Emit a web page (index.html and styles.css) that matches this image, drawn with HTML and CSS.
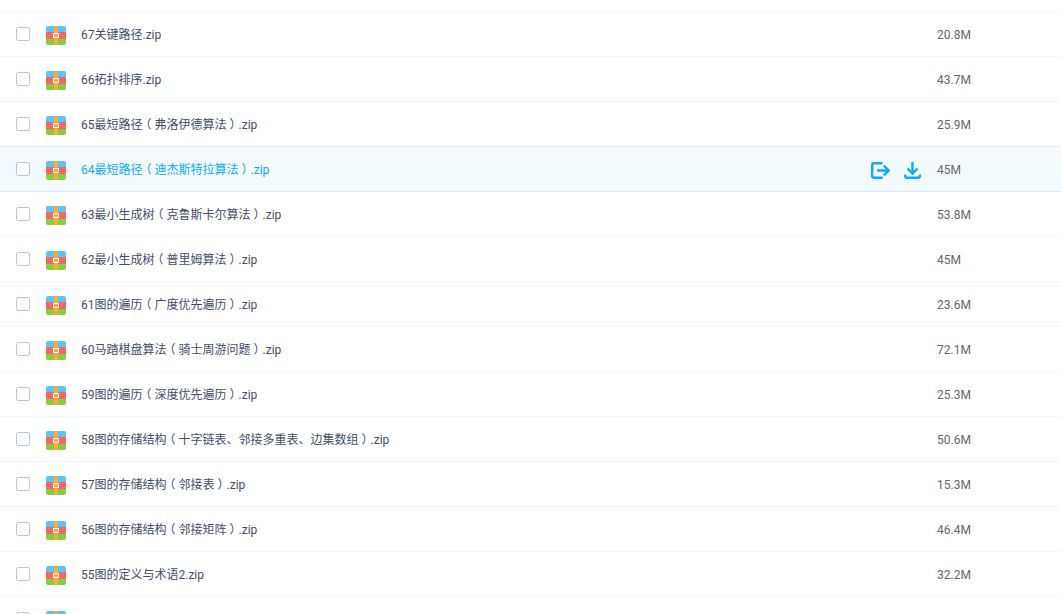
FILE: index.html
```html
<!DOCTYPE html>
<html lang="zh">
<head>
<meta charset="utf-8">
<title>文件列表</title>
<link rel="stylesheet" href="styles.css">
</head>
<body>
<svg class="defs" width="0" height="0" aria-hidden="true">
  <symbol id="zip" viewBox="0 0 20 19">
    <path d="M0 6V2a2 2 0 0 1 2-2h16a2 2 0 0 1 2 2v4z" fill="#59c5fa"/>
    <rect y="6" width="20" height="7" fill="#fc6363"/>
    <path d="M0 13h20v4a2 2 0 0 1-2 2H2a2 2 0 0 1-2-2z" fill="#84cf3f"/>
    <rect x="8" width="4" height="19" fill="#fbab37"/>
    <rect x="7" y="7" width="6" height="5" fill="#fff"/>
    <rect x="8" y="8" width="4" height="3" fill="#fbab37"/>
  </symbol>
</svg>
<ul class="list">
  <li class="row"><span class="check"></span><svg class="zip"><use href="#zip"/></svg></li>
  <li class="row"><span class="check"></span><svg class="zip"><use href="#zip"/></svg><span class="name">67关键路径.zip</span><span class="size">20.8M</span></li>
  <li class="row"><span class="check"></span><svg class="zip"><use href="#zip"/></svg><span class="name">66拓扑排序.zip</span><span class="size">43.7M</span></li>
  <li class="row"><span class="check"></span><svg class="zip"><use href="#zip"/></svg><span class="name">65最短路径<span class="paren">（</span>弗洛伊德算法<span class="paren">）</span>.zip</span><span class="size">25.9M</span></li>
  <li class="row active"><span class="check"></span><svg class="zip"><use href="#zip"/></svg><span class="name">64最短路径<span class="paren">（</span>迪杰斯特拉算法<span class="paren">）</span>.zip</span>
    <span class="actions">
      <svg class="act" viewBox="0 0 19 17" width="19" height="17" fill="none" stroke="#09aaff" stroke-width="2.4"><path d="M11.500 1.200H3a1.800 1.800 0 0 0-1.800 1.800v11a1.800 1.800 0 0 0 1.800 1.800h8.500"/><path d="M6 8.500h11.500M12.800 3.600l4.900 4.900-4.900 4.900"/></svg>
      <svg class="act" viewBox="0 0 17 17" width="17" height="17" fill="none" stroke="#09aaff" stroke-width="2.4"><path d="M8.500 0v11M3.500 6.500l5 5 5-5"/><path d="M1.200 12.500v1.800a1.500 1.500 0 0 0 1.500 1.500h11.600a1.500 1.500 0 0 0 1.500-1.500v-1.800"/></svg>
    </span>
    <span class="size">45M</span></li>
  <li class="row"><span class="check"></span><svg class="zip"><use href="#zip"/></svg><span class="name">63最小生成树<span class="paren">（</span>克鲁斯卡尔算法<span class="paren">）</span>.zip</span><span class="size">53.8M</span></li>
  <li class="row"><span class="check"></span><svg class="zip"><use href="#zip"/></svg><span class="name">62最小生成树<span class="paren">（</span>普里姆算法<span class="paren">）</span>.zip</span><span class="size">45M</span></li>
  <li class="row"><span class="check"></span><svg class="zip"><use href="#zip"/></svg><span class="name">61图的遍历<span class="paren">（</span>广度优先遍历<span class="paren">）</span>.zip</span><span class="size">23.6M</span></li>
  <li class="row"><span class="check"></span><svg class="zip"><use href="#zip"/></svg><span class="name">60马踏棋盘算法<span class="paren">（</span>骑士周游问题<span class="paren">）</span>.zip</span><span class="size">72.1M</span></li>
  <li class="row"><span class="check"></span><svg class="zip"><use href="#zip"/></svg><span class="name">59图的遍历<span class="paren">（</span>深度优先遍历<span class="paren">）</span>.zip</span><span class="size">25.3M</span></li>
  <li class="row"><span class="check"></span><svg class="zip"><use href="#zip"/></svg><span class="name">58图的存储结构<span class="paren">（</span>十字链表、邻接多重表、边集数组<span class="paren">）</span>.zip</span><span class="size">50.6M</span></li>
  <li class="row"><span class="check"></span><svg class="zip"><use href="#zip"/></svg><span class="name">57图的存储结构<span class="paren">（</span>邻接表<span class="paren">）</span>.zip</span><span class="size">15.3M</span></li>
  <li class="row"><span class="check"></span><svg class="zip"><use href="#zip"/></svg><span class="name">56图的存储结构<span class="paren">（</span>邻接矩阵<span class="paren">）</span>.zip</span><span class="size">46.4M</span></li>
  <li class="row"><span class="check"></span><svg class="zip"><use href="#zip"/></svg><span class="name">55图的定义与术语2.zip</span><span class="size">32.2M</span></li>
  <li class="row"><span class="check"></span><svg class="zip"><use href="#zip"/></svg></li>
</ul>
</body>
</html>
```
FILE: styles.css
```css
* { box-sizing: border-box; }
html, body { margin: 0; padding: 0; height: 100%; overflow: hidden; background: #fff; }
body { font: 12px/20px Roboto, "Noto Sans CJK SC", sans-serif; color: #424e67; }
.defs { display: block; height: 0; }
.list { list-style: none; margin: -33px 0 0; padding: 0; }
.row {
  display: flex;
  align-items: center;
  height: 45px;
  padding-left: 16px;
  border-bottom: 1px solid #f2f6fd;
}
.active {
  background: #f4fbff;
  border-bottom-color: #daebfe;
  box-shadow: 0 -1px 0 #daebfe;
  color: #09aaff;
}
.check {
  flex: none;
  width: 14px;
  height: 14px;
  border: 1px solid #bcc8d8;
  border-radius: 2px;
  background: #fff;
  margin-right: 16px;
}
.zip { flex: none; width: 20px; height: 19px; margin-right: 15px; margin-top: 2px; }
.name { flex: 1; min-width: 0; white-space: nowrap; padding-top: 2px; }
.paren { font-feature-settings: "halt"; padding: 0 3px; }
.actions { display: flex; align-items: center; gap: 14px; margin: 2px 16px 0 0; flex: none; }
.act { flex: none; display: block; }
.size { color: #666; flex: none; width: 124px; padding-top: 2px; }
```
